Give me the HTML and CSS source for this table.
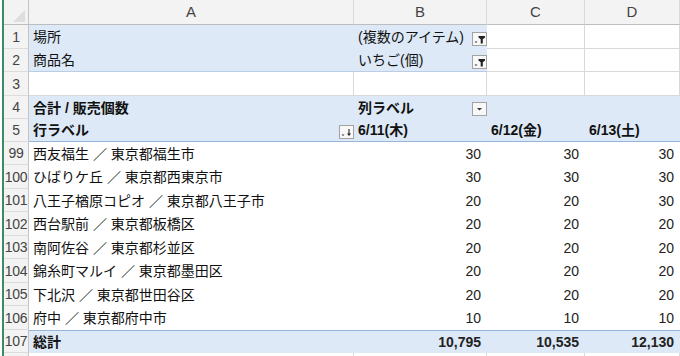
FILE: index.html
```html
<!DOCTYPE html>
<html>
<head>
<meta charset="utf-8">
<title>販売個数 ピボット</title>
<link rel="stylesheet" href="styles.css">
</head>
<body>
  <div class="sheet">
    <!-- column headers -->
    <div class="corner"><span class="corner-mark"></span></div>
    <div class="colhead">A</div>
    <div class="colhead">B</div>
    <div class="colhead">C</div>
    <div class="colhead">D</div>

    <!-- report filters -->
    <div class="rowhead">1</div>
    <div class="cell pv">場所</div>
    <div class="cell pv">(複数のアイテム)
      <span class="btn"><svg viewBox="0 0 13 12" width="13" height="12"><polygon points="1.5,8.5 4.5,8.5 3,10" fill="#333"/><path d="M5.5 3h6.5v1.6l-2.2 1.6v4.3h-2.1v-4.3l-2.2-1.6z" fill="#222"/></svg></span>
    </div>
    <div class="cell line"></div>
    <div class="cell line"></div>

    <div class="rowhead">2</div>
    <div class="cell pv pv-end">商品名</div>
    <div class="cell pv pv-end">いちご(個)
      <span class="btn"><svg viewBox="0 0 13 12" width="13" height="12"><polygon points="1.5,8.5 4.5,8.5 3,10" fill="#333"/><path d="M5.5 3h6.5v1.6l-2.2 1.6v4.3h-2.1v-4.3l-2.2-1.6z" fill="#222"/></svg></span>
    </div>
    <div class="cell line"></div>
    <div class="cell line"></div>

    <div class="rowhead">3</div>
    <div class="cell line"></div>
    <div class="cell line"></div>
    <div class="cell line"></div>
    <div class="cell line"></div>

    <!-- pivot header -->
    <div class="rowhead">4</div>
    <div class="cell pv b">合計 / 販売個数</div>
    <div class="cell pv b">列ラベル
      <span class="btn"><svg viewBox="0 0 13 12" width="13" height="12"><polygon points="4,5 9,5 6.5,7.5" fill="#333"/></svg></span>
    </div>
    <div class="cell pv"></div>
    <div class="cell pv"></div>

    <div class="rowhead">5</div>
    <div class="cell pv b head-end">行ラベル
      <span class="btn"><svg viewBox="0 0 13 12" width="13" height="12"><polygon points="1.5,8.5 4.5,8.5 3,10" fill="#333"/><path d="M9 3v5.5" stroke="#222" stroke-width="1.1"/><polygon points="7,7.5 11,7.5 9,10" fill="#222"/></svg></span>
    </div>
    <div class="cell pv b head-end">6/11(木)</div>
    <div class="cell pv b head-end">6/12(金)</div>
    <div class="cell pv b head-end">6/13(土)</div>

    <!-- rows -->
    <div class="rowhead">99</div>
    <div class="cell">西友福生 ／ 東京都福生市</div>
    <div class="cell num">30</div>
    <div class="cell num">30</div>
    <div class="cell num">30</div>

    <div class="rowhead">100</div>
    <div class="cell">ひばりケ丘 ／ 東京都西東京市</div>
    <div class="cell num">30</div>
    <div class="cell num">30</div>
    <div class="cell num">30</div>

    <div class="rowhead">101</div>
    <div class="cell">八王子楢原コピオ ／ 東京都八王子市</div>
    <div class="cell num">20</div>
    <div class="cell num">20</div>
    <div class="cell num">30</div>

    <div class="rowhead">102</div>
    <div class="cell">西台駅前 ／ 東京都板橋区</div>
    <div class="cell num">20</div>
    <div class="cell num">20</div>
    <div class="cell num">20</div>

    <div class="rowhead">103</div>
    <div class="cell">南阿佐谷 ／ 東京都杉並区</div>
    <div class="cell num">20</div>
    <div class="cell num">20</div>
    <div class="cell num">20</div>

    <div class="rowhead">104</div>
    <div class="cell">錦糸町マルイ ／ 東京都墨田区</div>
    <div class="cell num">20</div>
    <div class="cell num">20</div>
    <div class="cell num">20</div>

    <div class="rowhead">105</div>
    <div class="cell">下北沢 ／ 東京都世田谷区</div>
    <div class="cell num">20</div>
    <div class="cell num">20</div>
    <div class="cell num">20</div>

    <div class="rowhead">106</div>
    <div class="cell">府中 ／ 東京都府中市</div>
    <div class="cell num">10</div>
    <div class="cell num">10</div>
    <div class="cell num">10</div>

    <!-- grand total -->
    <div class="rowhead">107</div>
    <div class="cell pv b total">総計</div>
    <div class="cell pv b num total">10,795</div>
    <div class="cell pv b num total">10,535</div>
    <div class="cell pv b num total">12,130</div>

    <!-- next row, only its top edge shows -->
    <div class="rowhead"></div>
    <div class="cell line"></div>
    <div class="cell line"></div>
    <div class="cell line"></div>
    <div class="cell line"></div>
  </div>
</body>
</html>
```

FILE: styles.css
```css
html {
  height: 100%;
  overflow: hidden;
}
body {
  margin: 0;
  background: #fff;
  color: #111;
  font-family: "Liberation Sans", "Noto Sans CJK JP", sans-serif;
  font-size: 14px;
}

.sheet {
  display: grid;
  grid-template-columns: 25px 325px 133px 98px 95px;
  grid-template-rows: 25px 24px 23px 24px 23px 23px 23px 24px 23px 24px 23px 24px 23px 24px 23px 23px;
  margin-left: 2px;
  border-left: 2px solid #3d8a68;
}

.sheet > div {
  box-sizing: border-box;
  display: flex;
  align-items: center;
  line-height: 16px;
  white-space: nowrap;
  overflow: hidden;
}

/* headers */
.corner {
  background: #f3f3f3;
  border-right: 1px solid #c4c4c4;
  border-bottom: 1px solid #bdbdbd;
  justify-content: flex-end;
  align-items: flex-end !important;
  padding: 0 3px 2px 0;
}
.corner-mark {
  width: 0;
  height: 0;
  border-left: 12px solid transparent;
  border-bottom: 12px solid #dedede;
}
.colhead {
  background: #f3f3f3;
  border-right: 1px solid #dadada;
  border-bottom: 1px solid #bdbdbd;
  justify-content: center;
  color: #444;
  font-size: 15px;
}
.rowhead {
  background: #f3f3f3;
  border-right: 1px solid #c4c4c4;
  border-bottom: 1px solid #dcdcdc;
  justify-content: center;
  color: #444;
  font-size: 14px;
  letter-spacing: -0.3px;
}

/* cells */
.cell {
  padding: 0 0 0 4px;
}
.line {
  border-right: 1px solid #d9d9d9;
  border-bottom: 1px solid #d9d9d9;
}
.pv {
  background: #dde9f6;
}
.pv-end {
  border-bottom: 1px solid #b9cde6;
}
.head-end {
  border-bottom: 1px solid #97b4d9;
}
.total {
  border-top: 1px solid #97b4d9;
}
.b {
  font-weight: bold;
}
.num {
  justify-content: flex-end;
  padding: 0 6px 0 0;
  color: #222;
}

/* filter / sort buttons */
.btn {
  box-sizing: border-box;
  width: 15px;
  height: 14px;
  margin-left: auto;
  margin-top: 3px;
  border: 1px solid #a3a3a3;
  background: #f8f8f8;
  display: flex;
}
.btn svg {
  display: block;
}
```
